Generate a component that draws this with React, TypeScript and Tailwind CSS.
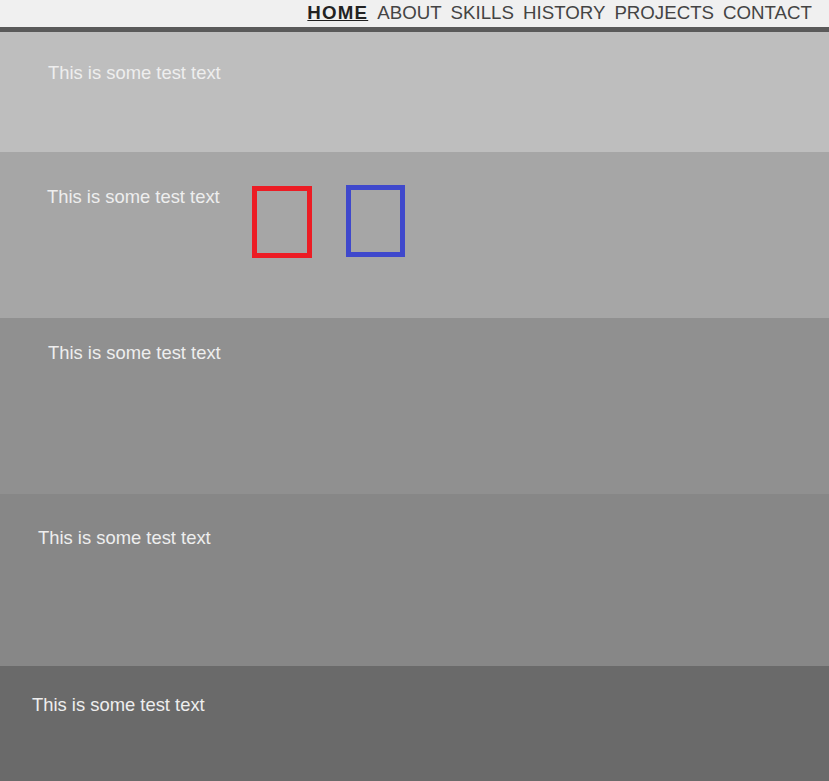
const font = { fontFamily: '"Liberation Sans", Arial, sans-serif' };

const navItems = ["HOME", "ABOUT", "SKILLS", "HISTORY", "PROJECTS", "CONTACT"];

export default function App() {
  return (
    <div className="min-h-[781px] bg-[#6a6a6a] text-[#eeeeee]" style={font}>
      <header className="h-[32px] bg-[#f0f0f0] border-b-[5px] border-[#5a5a5a] flex justify-end pr-[17px]">
        <nav className="flex gap-[9px] text-[18.7px] leading-[26px] text-[#444]">
          {navItems.map((item, i) => (
            <a
              key={item}
              href="#"
              className={i === 0 ? "font-bold underline tracking-[1.2px] text-[#222]" : ""}
            >
              {item}
            </a>
          ))}
        </nav>
      </header>

      <section className="h-[120px] bg-[#bebebe] pl-[48px] pt-[30px]">
        <p className="text-[18.4px] leading-[22px]">This is some test text</p>
      </section>

      <section className="h-[166px] bg-[#a6a6a6] pl-[47px] pt-[34px] flex items-start">
        <p className="text-[18.4px] leading-[22px]">This is some test text</p>
        <div className="ml-[32px] w-[60px] h-[72px] border-[5px] border-[#ec1c24]" />
        <div className="ml-[34px] -mt-[1px] w-[59px] h-[72px] border-[5px] border-[#3f48cc]" />
      </section>

      <section className="h-[176px] bg-[#909090] pl-[48px] pt-[24px]">
        <p className="text-[18.4px] leading-[22px]">This is some test text</p>
      </section>

      <section className="h-[172px] bg-[#878787] pl-[38px] pt-[33px]">
        <p className="text-[18.4px] leading-[22px]">This is some test text</p>
      </section>

      <section className="h-[115px] bg-[#6a6a6a] pl-[32px] pt-[28px]">
        <p className="text-[18.4px] leading-[22px]">This is some test text</p>
      </section>
    </div>
  );
}
